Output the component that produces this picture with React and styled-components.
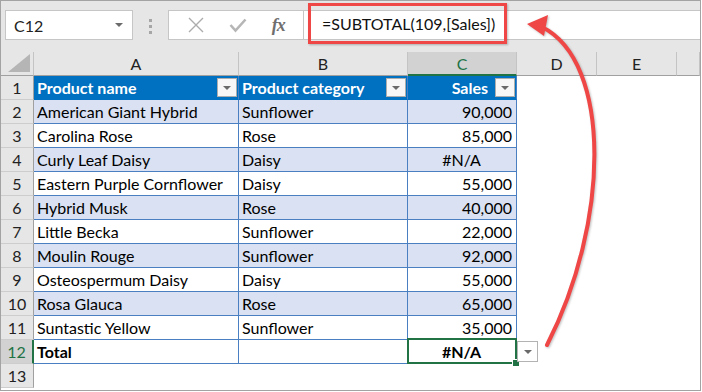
import React from "react";
import styled, { createGlobalStyle, css } from "styled-components";

const GlobalStyle = createGlobalStyle`
  html, body {
    margin: 0;
    padding: 0;
    background: #ffffff;
  }
  body {
    font-family: 'Lato', 'Liberation Sans', sans-serif;
  }
`;

const Frame = styled.div`
  position: relative;
  box-sizing: border-box;
  width: 701px;
  height: 391px;
  border: 1px solid #a3a3a3;
  overflow: hidden;
  background: #ffffff;
`;

const Toolbar = styled.div`
  display: flex;
  align-items: flex-start;
  height: 51px;
  box-sizing: border-box;
  padding: 9px 0 0 4px;
  background: #e6e6e6;
`;

const NameBox = styled.div`
  display: flex;
  align-items: center;
  justify-content: space-between;
  box-sizing: border-box;
  width: 128px;
  height: 30px;
  padding: 0 9px 0 8px;
  background: #ffffff;
  border: 1px solid #c6c6c6;
  font-size: 16px;
  color: #222;
`;

const Caret = styled.span`
  width: 0;
  height: 0;
  border-left: 4px solid transparent;
  border-right: 4px solid transparent;
  border-top: 4px solid #6b6b6b;
`;

const Grip = styled.div`
  display: flex;
  flex-direction: column;
  gap: 3px;
  margin: 9px 16px 0 16px;

  span {
    width: 3px;
    height: 3px;
    background: #a6a6a6;
  }
`;

const FxButtons = styled.div`
  display: flex;
  align-items: center;
  justify-content: space-around;
  box-sizing: border-box;
  width: 136px;
  height: 30px;
  padding: 0 6px;
  background: #ffffff;
  border: 1px solid #c6c6c6;
`;

const FxLabel = styled.span`
  font-family: 'Liberation Serif', serif;
  font-style: italic;
  font-weight: 700;
  font-size: 18px;
  color: #6f6f6f;
  letter-spacing: -1px;
`;

const FormulaInput = styled.div`
  flex: 1;
  display: flex;
  height: 30px;
  box-sizing: border-box;
  padding-left: 4px;
  background: #ffffff;
  border-top: 1px solid #c6c6c6;
  border-bottom: 1px solid #c6c6c6;
`;

const Highlight = styled.div`
  display: flex;
  align-items: center;
  box-sizing: border-box;
  height: 41px;
  margin-top: -8px;
  padding: 0 9px 0 11px;
  border: 3px solid #ef4646;
  box-shadow: 1px 1px 2px rgba(0, 0, 0, 0.25);
  font-size: 16px;
  color: #111;
`;

const Sheet = styled.div`
  display: grid;
  grid-template-columns: 33px 205px 169px 109px 80px 80px 1fr;
  grid-auto-rows: 24px;
`;

const ColHead = styled.div`
  display: flex;
  align-items: center;
  justify-content: center;
  box-sizing: border-box;
  background: #e6e6e6;
  border-right: 1px solid #c4c4c4;
  border-bottom: 1px solid #a0a0a0;
  font-size: 16px;
  color: #222;

  ${(p) =>
    p.$active &&
    css`
      background: #d2d2d2;
      color: #217346;
      border-bottom: 2px solid #217346;
    `}
`;

const Corner = styled(ColHead)`
  position: relative;
  justify-content: flex-end;
  align-items: flex-end;
  padding: 0 3px 3px 0;
`;

const RowHead = styled.div`
  display: flex;
  align-items: center;
  justify-content: center;
  box-sizing: border-box;
  background: #e6e6e6;
  border-right: 1px solid #a0a0a0;
  border-bottom: 1px solid #cdcdcd;
  font-size: 16px;
  color: #222;

  ${(p) =>
    p.$active &&
    css`
      background: #d2d2d2;
      color: #217346;
      border-right: 2px solid #217346;
    `}
`;

const Cell = styled.div`
  position: relative;
  z-index: ${(p) => (p.$current ? 2 : "auto")};
  display: flex;
  align-items: center;
  justify-content: ${(p) =>
    p.$align === "right" ? "flex-end" : p.$align === "center" ? "center" : "flex-start"};
  box-sizing: border-box;
  padding: 0 4px 0 3px;
  font-size: 16px;
  font-weight: ${(p) => (p.$bold ? 700 : 400)};
  color: #000;
  white-space: nowrap;
  background: ${(p) => (p.$stripe ? "#d9e1f2" : "#ffffff")};

  ${(p) =>
    p.$table &&
    css`
      border-right: 1px solid #4a7fc1;
      border-bottom: 1px solid #4a7fc1;
    `}
`;

const HeadCell = styled(Cell)`
  justify-content: ${(p) => (p.$align === "right" ? "flex-end" : "space-between")};
  gap: 7px;
  padding-right: 1px;
  background: #0070c0;
  color: #ffffff;
  font-weight: 700;
  border-bottom: 1px solid #0070c0;
`;

const FilterButton = styled.span`
  display: flex;
  align-items: center;
  justify-content: center;
  box-sizing: border-box;
  width: 20px;
  height: 19px;
  background: #f7f7f7;
  border: 1px solid #adadad;

  &::before {
    content: "";
    border-left: 4px solid transparent;
    border-right: 4px solid transparent;
    border-top: 4px solid #6a6a6a;
  }
`;

const Selected = styled.span`
  position: absolute;
  left: -1px;
  top: -2px;
  right: -1px;
  bottom: -1px;
  border: 2px solid #217346;
  pointer-events: none;

  &::after {
    content: "";
    position: absolute;
    right: -5px;
    bottom: -5px;
    width: 6px;
    height: 6px;
    background: #217346;
    border: 1px solid #ffffff;
  }
`;

const TotalDrop = styled(FilterButton)`
  position: absolute;
  left: calc(100% + 1px);
  top: 1px;
  width: 21px;
  height: 21px;
  background: #ffffff;
  border-color: #b3b3b3;
`;

const ArrowLayer = styled.svg`
  position: absolute;
  left: -1px;
  top: -1px;
  z-index: 3;
  pointer-events: none;
  filter: drop-shadow(1px 1px 1px rgba(0, 0, 0, 0.25));
`;

const rows = [
  ["American Giant Hybrid", "Sunflower", "90,000"],
  ["Carolina Rose", "Rose", "85,000"],
  ["Curly Leaf Daisy", "Daisy", "#N/A"],
  ["Eastern Purple Cornflower", "Daisy", "55,000"],
  ["Hybrid Musk", "Rose", "40,000"],
  ["Little Becka", "Sunflower", "22,000"],
  ["Moulin Rouge", "Sunflower", "92,000"],
  ["Osteospermum Daisy", "Daisy", "55,000"],
  ["Rosa Glauca", "Rose", "65,000"],
  ["Suntastic Yellow", "Sunflower", "35,000"],
];

// columns D, E and the partial one after them
const Blank = () => (
  <>
    <Cell />
    <Cell />
    <Cell />
  </>
);

const App = () => {
  return (
    <>
      <GlobalStyle />
      <Frame>
        <Toolbar>
          <NameBox>
            <span>C12</span>
            <Caret />
          </NameBox>
          <Grip>
            <span />
            <span />
            <span />
          </Grip>
          <FxButtons>
            <svg width="18" height="16" viewBox="0 0 18 16">
              <path d="M2 1 L16 15 M16 1 L2 15" stroke="#acacac" strokeWidth="1.4" fill="none" />
            </svg>
            <svg width="18" height="16" viewBox="0 0 18 16">
              <path d="M1.5 8 L6.5 13.5 L16.5 2.5" stroke="#b6b6b6" strokeWidth="2.6" fill="none" />
            </svg>
            <FxLabel>fx</FxLabel>
          </FxButtons>
          <FormulaInput>
            <Highlight>=SUBTOTAL(109,[Sales])</Highlight>
          </FormulaInput>
        </Toolbar>

        <Sheet>
          <Corner>
            <svg width="22" height="18" viewBox="0 0 22 18">
              <polygon points="22,0 22,18 0,18" fill="#b5b5b5" />
            </svg>
          </Corner>
          <ColHead>A</ColHead>
          <ColHead>B</ColHead>
          <ColHead $active>C</ColHead>
          <ColHead>D</ColHead>
          <ColHead>E</ColHead>
          <ColHead />

          <RowHead>1</RowHead>
          <HeadCell $table>
            Product name
            <FilterButton />
          </HeadCell>
          <HeadCell $table>
            Product category
            <FilterButton />
          </HeadCell>
          <HeadCell $table $align="right">
            Sales
            <FilterButton />
          </HeadCell>
          <Blank />

          {rows.map(([name, cat, sales], i) => (
            <React.Fragment key={name}>
              <RowHead>{i + 2}</RowHead>
              <Cell $table $stripe={i % 2 === 0}>{name}</Cell>
              <Cell $table $stripe={i % 2 === 0}>{cat}</Cell>
              <Cell
                $table
                $stripe={i % 2 === 0}
                $align={sales === "#N/A" ? "center" : "right"}
              >
                {sales}
              </Cell>
              <Blank />
            </React.Fragment>
          ))}

          <RowHead $active>12</RowHead>
          <Cell $table $bold>Total</Cell>
          <Cell $table />
          <Cell $table $bold $current $align="center">
            #N/A
            <Selected />
            <TotalDrop />
          </Cell>
          <Blank />

          <RowHead>13</RowHead>
          <Cell />
          <Cell />
          <Cell />
          <Blank />
        </Sheet>

        <ArrowLayer width="702" height="392" viewBox="0 0 702 392">
          <path
            d="M547 345 C 610 222, 612 62, 542 27"
            stroke="#ef4646"
            strokeWidth="4"
            fill="none"
            strokeLinecap="round"
          />
          <polygon points="527,24 548,15 544,36" fill="#ef4646" />
        </ArrowLayer>
      </Frame>
    </>
  );
};

export default App;
